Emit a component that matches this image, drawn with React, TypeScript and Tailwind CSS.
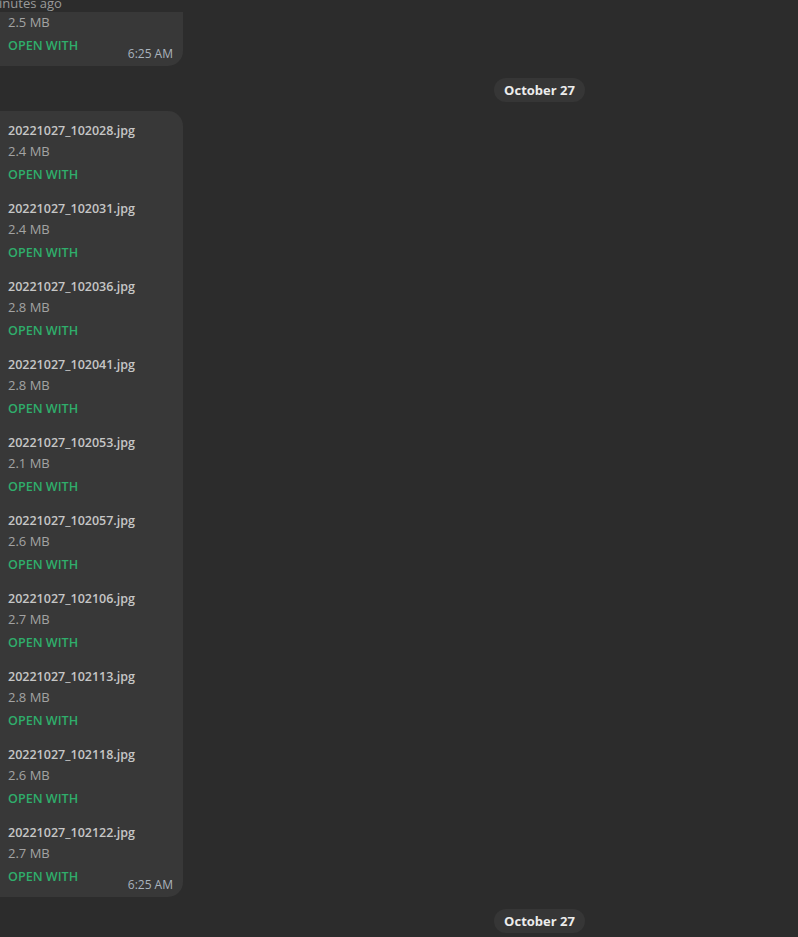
import React from 'react';

const files = [
  { name: '20221027_102028.jpg', size: '2.4 MB' },
  { name: '20221027_102031.jpg', size: '2.4 MB' },
  { name: '20221027_102036.jpg', size: '2.8 MB' },
  { name: '20221027_102041.jpg', size: '2.8 MB' },
  { name: '20221027_102053.jpg', size: '2.1 MB' },
  { name: '20221027_102057.jpg', size: '2.6 MB' },
  { name: '20221027_102106.jpg', size: '2.7 MB' },
  { name: '20221027_102113.jpg', size: '2.8 MB' },
  { name: '20221027_102118.jpg', size: '2.6 MB' },
  { name: '20221027_102122.jpg', size: '2.7 MB' },
];

const OpenWith = () => (
  <div className="h-5 leading-5 text-[12.6px] font-semibold text-[#2fae6b]">OPEN WITH</div>
);

const Time = () => (
  <span className="absolute right-[10px] bottom-[4px] h-4 leading-4 text-[12px] text-[#a9b3bd]">6:25 AM</span>
);

const DatePill = () => (
  <div className="flex justify-center pl-[281px]">
    <div className="h-6 leading-6 px-[10px] rounded-full bg-[#363636] text-[13px] font-bold text-[#ececec]">
      October 27
    </div>
  </div>
);

export default function App() {
  return (
    <div
      className="w-[798px] h-[937px] overflow-hidden bg-[#2c2c2c]"
      style={{ fontFamily: '"Open Sans", "Noto Sans", sans-serif' }}
    >
      {/* previous message, cut off at top */}
      <div className="h-[12px] overflow-hidden">
        <div className="-mt-[7px] -ml-[13px] text-[13px] leading-5 text-[#9a9a9a]">minutes ago</div>
      </div>
      <div className="relative w-[183px] pl-2 pb-[10px] rounded-br-[15px] bg-[#383838]">
        <div className="h-5 leading-5 text-[13px] text-[#a3a3a3]">2.5 MB</div>
        <div className="mt-1">
          <OpenWith />
        </div>
        <Time />
      </div>

      <div className="mt-3 mb-[9px]">
        <DatePill />
      </div>

      <div className="relative w-[183px] pl-2 pt-[10px] pb-[10px] rounded-r-[15px] bg-[#383838]">
        {files.map((f, i) => (
          <div key={f.name} className={i < files.length - 1 ? 'mb-[14px]' : ''}>
            <div className="h-5 leading-5 text-[12.5px] font-semibold text-[#c6c6c6]">{f.name}</div>
            <div className="h-5 leading-5 text-[13px] text-[#a3a3a3]">{f.size}</div>
            <div className="mt-1">
              <OpenWith />
            </div>
          </div>
        ))}
        <Time />
      </div>

      <div className="mt-3">
        <DatePill />
      </div>
    </div>
  );
}
